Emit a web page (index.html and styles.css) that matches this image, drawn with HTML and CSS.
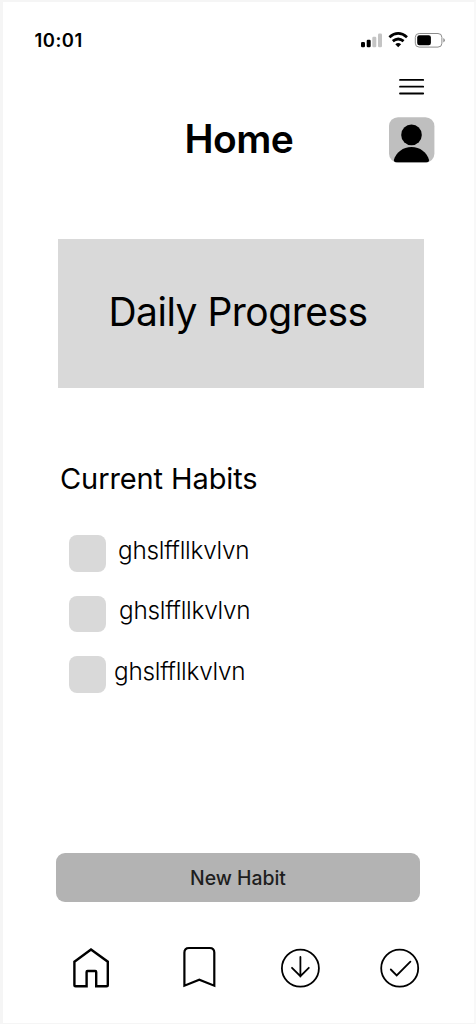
FILE: index.html
```html
<!DOCTYPE html>
<html lang="en">
<head>
<meta charset="utf-8">
<title>Home</title>
<link rel="stylesheet" href="styles.css">
</head>
<body>
<div class="screen">
  <div class="status">
    <span class="time">10:01</span>
    <svg class="indicators" width="86" height="18" viewBox="360 31 86 18">
      <rect x="361" y="42" width="4" height="5.2" rx="1.2"/>
      <rect x="366.7" y="39.8" width="4" height="7.4" rx="1.2"/>
      <rect class="dim" x="372.3" y="36.8" width="4" height="10.4" rx="1.2"/>
      <rect class="dim" x="378" y="33.6" width="4" height="13.6" rx="1.2"/>
      <path class="wave" d="M389.4 37.2Q398.2 29.6 407 37.2M392.8 41.2Q398.2 36.8 403.6 41.2"/>
      <path d="M395.3 44.2Q398.2 42 401.1 44.2L398.2 47.2Z"/>
      <rect class="shell" x="415.3" y="33.5" width="26.6" height="13.6" rx="3.9"/>
      <rect x="417.2" y="35.3" width="13.7" height="10" rx="2.2"/>
      <path class="cap" d="M443.3 38.1Q444.9 38.8 444.9 40.3Q444.9 41.8 443.3 42.5Z"/>
    </svg>
  </div>
  <button class="menu" aria-label="Menu">
    <svg width="28" height="20" viewBox="398 77 28 20"><path d="M400 79.9H423.2M400 86.7H423.2M400 93.5H423.2"/></svg>
  </button>
  <header class="header">
    <h1 class="title">Home</h1>
    <svg class="avatar" width="46" height="46" viewBox="0 0 46 46">
      <rect class="avatar-bg" x="0" y=".2" width="45.4" height="45.5" rx="9"/>
      <circle cx="22.5" cy="17.9" r="10.3"/>
      <path d="M4.8 43C7.2 35.5 13.9 30.1 22.5 30.1S37.8 35.5 40.1 43Q40.3 45 38.2 45.3H6.7Q4.6 45 4.8 43Z"/>
    </svg>
  </header>
  <section class="progress"><span class="progress-label">Daily Progress</span></section>
  <h2 class="subtitle">Current Habits</h2>
  <ul class="habits">
    <li class="habit"><span class="box"></span><span class="name">ghslffllkvlvn</span></li>
    <li class="habit habit-wide"><span class="box"></span><span class="name">ghslffllkvlvn</span></li>
    <li class="habit habit-tight"><span class="box"></span><span class="name">ghslffllkvlvn</span></li>
  </ul>
  <button class="new-habit">New Habit</button>
  <nav class="tabs">
    <svg width="40" height="44" viewBox="71 946 40 44"><path class="thick" d="M74.4 961.7L91 949.5L107.8 961.7V985Q107.8 986.3 106.5 986.3H96.2V972Q96.2 971 95.2 971H87.6Q86.6 971 86.6 972V986.3H75.7Q74.4 986.3 74.4 985Z"/></svg>
    <svg width="40" height="44" viewBox="180 946 40 44"><path class="medium" d="M184.4 985.7V952.6Q184.4 948 189 948H209.7Q214.3 948 214.3 952.6V985.7L199.3 979.8Z"/></svg>
    <svg width="40" height="44" viewBox="280 946 40 44"><circle cx="300.4" cy="968.2" r="18.5"/><path d="M300.4 957V976.5M292 967.8L300.4 976.2L308.8 967.8"/></svg>
    <svg width="40" height="44" viewBox="380 946 40 44"><circle cx="399.7" cy="968.2" r="18.5"/><path d="M390.8 969.5L396.7 975.4L410.4 961.6"/></svg>
  </nav>
</div>
</body>
</html>
```
FILE: styles.css
```css
* {
  box-sizing: border-box;
}

body {
  margin: 0;
  background: #fff;
  color: #000;
  font-family: Inter, "Liberation Sans", sans-serif;
}

.screen {
  display: flex;
  flex-direction: column;
  width: 476px;
  height: 1024px;
  overflow: hidden;
  border: solid #f5f5f5;
  border-width: 2px 2px 1px 3px;
  border-right-color: #f8f8f8;
}

.status {
  display: flex;
  justify-content: space-between;
  align-items: center;
  height: 18px;
  margin: 29px 28px 0 31.5px;
}

.time {
  font-size: 18.4px;
  font-weight: 600;
  letter-spacing: 0.5px;
  line-height: 18px;
}

.indicators .dim {
  fill: #c4c4c4;
}

.indicators .wave {
  fill: none;
  stroke: #000;
  stroke-width: 2.8;
}

.indicators .shell {
  fill: none;
  stroke: #8c8c8c;
}

.indicators .cap {
  fill: #8c8c8c;
}

.menu {
  display: flex;
  align-self: flex-end;
  margin: 28px 48px 0 0;
  padding: 0;
  border: 0;
  background: none;
}

.menu path {
  stroke: #000;
  stroke-width: 1.8;
  stroke-linecap: round;
}

.header {
  display: flex;
  justify-content: space-between;
  height: 46px;
  margin: 20px 39px 0 181.6px;
}

.title {
  margin: 0;
  font-size: 39px;
  font-weight: 600;
  letter-spacing: -0.6px;
  line-height: 44px;
}

.avatar-bg {
  fill: #bfbfbf;
}

.progress {
  height: 149px;
  margin: 76px 50px 0 55.4px;
  padding: 49px 0 0 50px;
  background: #d9d9d9;
}

.progress-label {
  display: block;
  font-size: 39px;
  font-weight: 400;
  letter-spacing: -0.5px;
  line-height: 48px;
  white-space: nowrap;
}

.subtitle {
  margin: 73px 0 0 57px;
  font-size: 29px;
  font-weight: 400;
  letter-spacing: -0.1px;
  line-height: 36px;
}

.habits {
  display: flex;
  flex-direction: column;
  gap: 24px;
  margin: 38.3px 0 0 66px;
  padding: 0;
  list-style: none;
}

.habit {
  display: flex;
  gap: 12.5px;
  height: 36.4px;
}

.habit-wide {
  gap: 13.5px;
}

.habit-wide .name {
  line-height: 28px;
}

.habit-tight {
  gap: 8.5px;
}

.box {
  width: 36.5px;
  height: 36.5px;
  border-radius: 8px;
  background: #d9d9d9;
}

.name {
  font-size: 24.3px;
  font-weight: 300;
  letter-spacing: -0.25px;
  line-height: 30px;
}

.new-habit {
  height: 49px;
  margin: 160.5px 54px 0 53px;
  padding: 2px 0 0;
  border: 0;
  border-radius: 9px;
  background: #b3b3b3;
  color: #1e1e1e;
  font-family: inherit;
  font-size: 19.4px;
  font-weight: 500;
  line-height: 47px;
}

.tabs {
  display: grid;
  grid-template-columns: 109px 100px 100px 40px;
  margin: 43.6px 0 0 68px;
}

.tabs svg {
  fill: none;
  stroke: #000;
  stroke-width: 1.8;
  stroke-linecap: round;
}

.tabs .thick {
  stroke-width: 2.4;
}

.tabs .medium {
  stroke-width: 2.2;
}
```
